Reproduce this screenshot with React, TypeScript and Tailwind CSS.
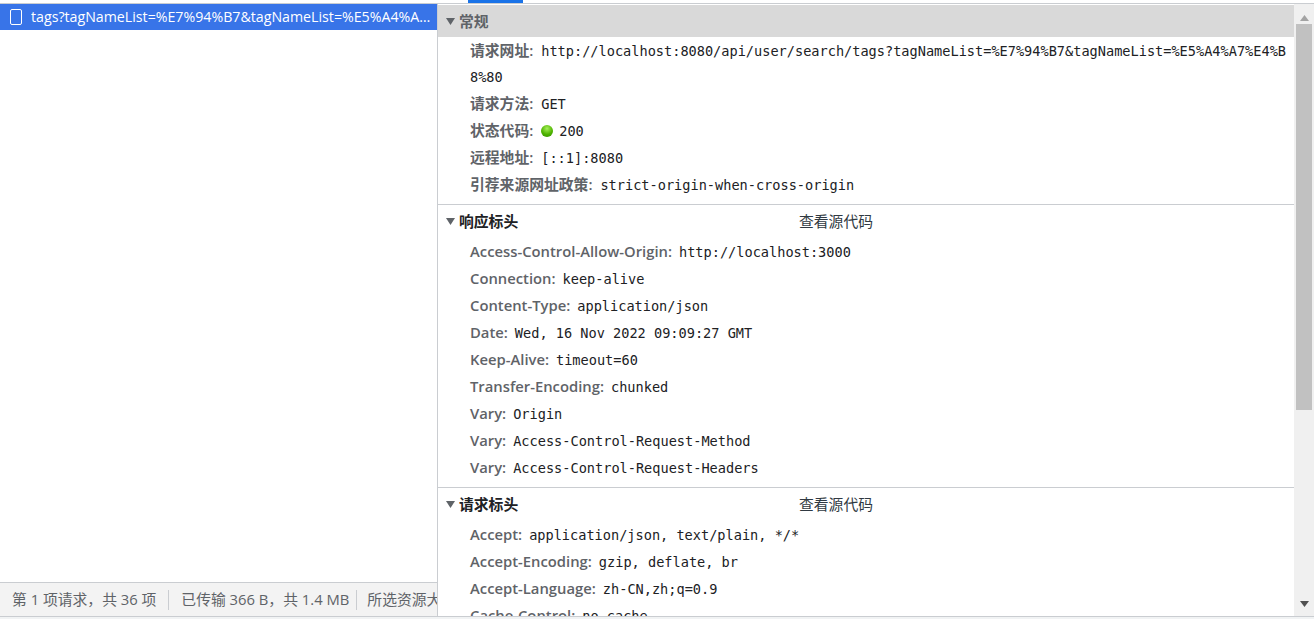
import React from 'react';

const sans = "font-['Open_Sans','Noto_Sans_CJK_SC',sans-serif]";

const general = [
  { k: '请求网址:', v: 'http://localhost:8080/api/user/search/tags?tagNameList=%E7%94%B7&tagNameList=%E5%A4%A7%E4%B8%80', long: true },
  { k: '请求方法:', v: 'GET' },
  { k: '状态代码:', v: '200', dot: true },
  { k: '远程地址:', v: '[::1]:8080' },
  { k: '引荐来源网址政策:', v: 'strict-origin-when-cross-origin' },
];

const response = [
  { k: 'Access-Control-Allow-Origin:', v: 'http://localhost:3000' },
  { k: 'Connection:', v: 'keep-alive' },
  { k: 'Content-Type:', v: 'application/json' },
  { k: 'Date:', v: 'Wed, 16 Nov 2022 09:09:27 GMT' },
  { k: 'Keep-Alive:', v: 'timeout=60' },
  { k: 'Transfer-Encoding:', v: 'chunked' },
  { k: 'Vary:', v: 'Origin' },
  { k: 'Vary:', v: 'Access-Control-Request-Method' },
  { k: 'Vary:', v: 'Access-Control-Request-Headers' },
];

const request = [
  { k: 'Accept:', v: 'application/json, text/plain, */*' },
  { k: 'Accept-Encoding:', v: 'gzip, deflate, br' },
  { k: 'Accept-Language:', v: 'zh-CN,zh;q=0.9' },
  { k: 'Cache-Control:', v: 'no-cache' },
];

type Item = { k: string; v: string; dot?: boolean; long?: boolean };

function Row({ item, grey }: { item: Item; grey?: boolean }) {
  return (
    <div className={`pl-[32px] pr-[8px] text-[14px] break-all ${item.long ? 'pt-[1px] leading-[26px]' : 'leading-[27px]'}`}>
      <span className={`${sans} text-[14.8px] leading-[14px] font-semibold text-[#5f6368]`}>{item.k}</span>
      <span className={`inline-block ${grey ? 'w-[8px]' : 'w-[7px]'}`} />
      {item.dot ? (
        <span className="inline-block w-[12px] h-[12px] mr-[6px] align-[-1px] rounded-full bg-[radial-gradient(circle_at_50%_30%,#a6f05a,#4fb300_55%,#2f8f00)]" />
      ) : null}
      <span className="font-['DejaVu_Sans_Mono',monospace] text-[13.6px] leading-[14px] text-[#202124]">{item.v}</span>
    </div>
  );
}

function Section({ title, items, source, grey }: { title: string; items: Item[]; source?: boolean; grey?: boolean }) {
  return (
    <div className="border-b border-[#cacdd1] pb-[6px]">
      <div className={`flex items-center h-[32px] pl-[8px] ${grey ? 'bg-[#d9d9d9]' : ''}`}>
        <svg width="9" height="7" viewBox="0 0 9 7" className="mr-[4px] shrink-0">
          <path d="M0 0h9L4.5 7z" fill="#5f6368" />
        </svg>
        <span className={`${sans} text-[14.8px] font-semibold w-[340px] ${grey ? 'text-[#5f6368]' : 'text-[#202124]'}`}>{title}</span>
        {source ? <span className={`${sans} text-[14.8px] text-[#303942]`}>查看源代码</span> : null}
      </div>
      <div className={grey ? '' : 'pt-[1px]'}>
        {items.map((item, i) => (
          <Row key={i} item={item} grey={grey} />
        ))}
      </div>
    </div>
  );
}

export default function App() {
  return (
    <div className="w-[1314px] h-[619px] overflow-hidden bg-white flex flex-col">
      <div className="h-[4px] shrink-0 flex border-b border-[#cacdd1]">
        <div className="w-[468px]" />
        <div className="w-[55px] bg-[#1a73e8]" />
      </div>

      <div className="h-[612px] flex min-h-0">
        {/* request list */}
        <div className="w-[438px] shrink-0 flex flex-col border-r border-[#cacdd1]">
          <div className="h-[26px] shrink-0 bg-[#3874e8] flex items-center pl-[10px] pr-[6px] text-white">
            <span className="w-[12px] h-[16px] border border-white rounded-[2px] shrink-0 mr-[9px]" />
            <span className={`${sans} text-[14.2px] truncate`}>
              tags?tagNameList=%E7%94%B7&amp;tagNameList=%E5%A4%A7%E4%B8%80
            </span>
          </div>
          <div className="flex-1" />
          <div className={`${sans} h-[34px] shrink-0 bg-[#f3f3f3] border-t border-[#cacdd1] flex items-center overflow-hidden whitespace-nowrap text-[14.8px] text-[#5f6368]`}>
            <span className="pl-[12px] pr-[12px] shrink-0">第 1 项请求，共 36 项</span>
            <span className="w-px h-[20px] bg-[#cacdd1] shrink-0" />
            <span className="pl-[12px] pr-[7px] shrink-0">已传输 366 B，共 1.4 MB</span>
            <span className="w-px h-[20px] bg-[#cacdd1] shrink-0" />
            <span className="pl-[10px] shrink-0">所选资源大小</span>
          </div>
        </div>

        {/* headers */}
        <div className="flex-1 min-w-0 overflow-hidden pt-[1px]">
          <Section title="常规" items={general} grey />
          <Section title="响应标头" items={response} source />
          <Section title="请求标头" items={request} source />
        </div>

        {/* scrollbar */}
        <div className="w-[20px] shrink-0 bg-[#f0f0f0] flex flex-col items-center">
          <div className="h-[20px] shrink-0 flex items-end justify-center pb-[3px]">
            <svg width="9" height="6" viewBox="0 0 9 6">
              <path d="M4.5 0L9 6H0z" fill="#a3a3a3" />
            </svg>
          </div>
          <div className="w-[16px] h-[386px] shrink-0 bg-[#c1c1c1]" />
          <div className="flex-1" />
          <div className="h-[17px] shrink-0 flex items-start justify-center pt-[2px]">
            <svg width="9" height="6" viewBox="0 0 9 6">
              <path d="M0 0h9L4.5 6z" fill="#505050" />
            </svg>
          </div>
        </div>
      </div>

      <div className="flex-1 bg-[#f1f3f4] border-t border-[#cacdd1]" />
    </div>
  );
}
